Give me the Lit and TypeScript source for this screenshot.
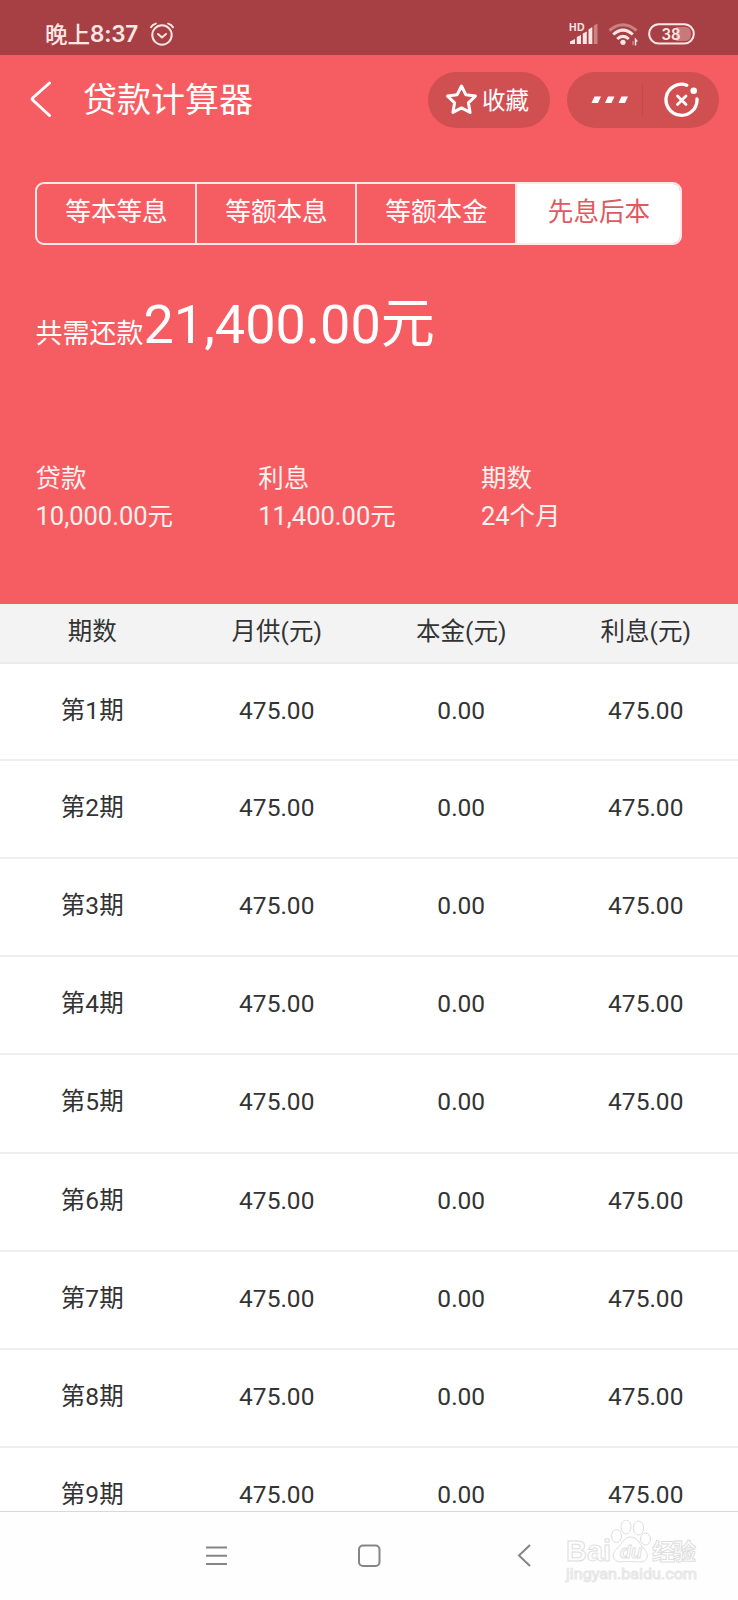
import { LitElement, html, css } from "lit";
import { customElement } from "lit/decorators.js";
import { classMap } from "lit/directives/class-map.js";

const TABS = ["等本等息", "等额本息", "等额本金", "先息后本"];
const SUMMARY = [
  ["贷款", "10,000.00元"],
  ["利息", "11,400.00元"],
  ["期数", "24个月"],
];
const HEAD = ["期数", "月供(元)", "本金(元)", "利息(元)"];
const ROWS = [1, 2, 3, 4, 5, 6, 7, 8, 9].map((n) => [`第${n}期`, "475.00", "0.00", "475.00"]);

@customElement("status-bar")
class StatusBar extends LitElement {
  static styles = css`
    :host { display: flex; align-items: center; height: 55px; background: #a74044; color: #ffe6e4; box-sizing: border-box; padding: 12px 43px 0 45px; }
    .time { line-height: 30px; display: flex; align-items: center; width: 102px; white-space: nowrap; }
    .cn { font: 500 22.5px/30px "Noto Sans CJK SC", sans-serif; margin-top: -2px; }
    .num { font: 600 22.5px/30px Inter, sans-serif; letter-spacing: -0.2px; }
    .grow { flex: 1; }
    svg { display: block; flex: none; }
    .wifi { margin-left: 9px; }
    .batt { margin-left: 9px; }
    .bt { font: 600 15.5px Inter, sans-serif; }
    .hd { font: 700 10.5px "Liberation Sans", sans-serif; }
  `;
  render() {
    return html`
      <div class="time"><span class="cn">晚上</span><span class="num">8:37</span></div>
      <svg width="28" height="28" viewBox="0 0 28 28" fill="none" stroke="#ffe6e4" stroke-width="2" stroke-linecap="round" stroke-linejoin="round">
        <circle cx="15" cy="15" r="9.7"/><path d="M11 14l4 3.400 4-3.400M4 7.200q1.500-2.700 4.800-3.600M26 7.200q-1.500-2.700-4.800-3.600"/>
      </svg>
      <div class="grow"></div>
      <svg width="30" height="24" viewBox="0 0 30 24" fill="#ffe6e4">
        <text class="hd" x="0" y="8.500" textLength="15.500">HD</text>
        <path d="M1 22v-2.500l5-2.500v5zM7.800 22v-7l4.200-2v9zM13.800 22V11.500l4-2V22zM19.500 22V7.500l3.800-2.500v17z"/><path opacity=".4" d="M24.800 22V3.500l3.700-2V22z"/>
      </svg>
      <svg class="wifi" width="31" height="24" viewBox="0 0 31 24" fill="none" stroke="#ffe6e4" stroke-width="3">
        <path opacity=".4" d="M1.500 8.500Q15 -3 28.500 8.500"/><path d="M5.200 12.500Q15 3.800 24.800 12.500M9.200 17Q15 11.800 20.800 17"/><circle cx="15" cy="20.300" r="2.600" fill="#ffe6e4" stroke="none"/><path stroke-width="1" opacity=".6" d="M25 23v-4"/><path stroke-width="1.500" d="M27.500 23.500v-6l1.800 2"/>
      </svg>
      <svg class="batt" width="47" height="22" viewBox="0 0 47 22">
        <path d="M28 4h9q6 0 6 7t-6 7h-9z" fill="#ffd0d0" opacity=".4"/>
        <rect x="1.200" y="1.200" width="44.600" height="19.300" rx="9.600" fill="none" stroke="#ffe6e4" stroke-width="2"/>
        <text class="bt" x="13.500" y="16.500" textLength="19" lengthAdjust="spacingAndGlyphs" fill="#ffe6e4">38</text>
      </svg>`;
  }
}

@customElement("title-bar")
class TitleBar extends LitElement {
  static styles = css`
    :host { display: flex; align-items: center; height: 89px; box-sizing: border-box; padding: 0 19px 0 29px; color: #fff; }
    h1 { margin: -4px 0 0 32px; font: 400 34px/50px "Noto Sans CJK SC", sans-serif; flex: 1; }
    .back { margin-top: -1px; }
    .fav, .capsule { display: flex; align-items: center; height: 56px; border-radius: 28px; background: #d05052; box-sizing: border-box; }
    .fav { width: 122px; padding-left: 17px; font: 400 23.500px/36px "Noto Sans CJK SC", sans-serif; gap: 4px; }
    .fav span { margin-top: -2px; }
    .capsule { width: 152px; margin-left: 17px; padding-left: 24px; }
    .sep { width: 1px; height: 34px; background: #c5484b; margin: 0 21px 0 13px; }
    svg { display: block; flex: none; }
  `;
  render() {
    return html`
      <svg class="back" width="22" height="38" viewBox="0 0 22 38" fill="none" stroke="#fff" stroke-width="3" stroke-linecap="round" stroke-linejoin="round"><path d="M20.500 3L3.700 18q-1 1 0 2L20.500 35.500"/></svg>
      <h1>贷款计算器</h1>
      <div class="fav">
        <svg width="33" height="33" viewBox="0 0 33 33" fill="none" stroke="#fff" stroke-width="3" stroke-linejoin="round"><path d="M16.500 3l4.300 8.700 9.600 1.400-7 6.700 1.700 9.600-8.600-4.500-8.600 4.500 1.700-9.600-7-6.700 9.600-1.400z"/></svg><span>收藏</span>
      </div>
      <div class="capsule">
        <svg width="38" height="8" viewBox="0 0 38 8" fill="#fff"><path d="M3.500 .500H10L7 7H.500zM17 .500h6.500l-3 6.500H14zM30.500 .500H37l-3 6.500h-6.500z"/></svg>
        <span class="sep"></span>
        <svg width="36" height="36" viewBox="0 0 36 36" fill="none" stroke="#fff" stroke-width="3.300" stroke-linecap="round"><path d="M22.800 3.200A15.500 15.500 0 1 0 33 17"/><path stroke-width="2.800" d="M13.500 14l8.500 8.500M22 14l-8.500 8.500"/><circle cx="29.700" cy="8.800" r="3.300" fill="#fff" stroke="none"/></svg>
      </div>`;
  }
}

@customElement("nav-bar")
class NavBar extends LitElement {
  static styles = css`
    :host { display: grid; grid-template-columns: 206px 152px 152px 1fr; align-items: center; height: 89px; box-sizing: border-box; border-top: 1px solid #d8d8d8; background: #fefefe; color: #858585; }
    svg { display: block; }
    .icon { margin-top: -1px; }
    .last { display: flex; align-items: flex-start; height: 88px; }
    .last .arrow { margin: 31px 0 0 7px; }
    .mark { margin: 8px 0 0 33px; }
    .ol { fill: #fefefe; stroke: #dedede; stroke-width: 1; }
    .t1 { font: 700 29px "Liberation Sans", sans-serif; }
    .t2 { font: italic 700 18px "Liberation Sans", sans-serif; }
    .t3 { font: 700 23px "Noto Sans CJK SC", sans-serif; }
    .t4 { font: 400 15px Roboto, "Liberation Sans", sans-serif; stroke: #e6e6e6; stroke-width: 1; }
  `;
  render() {
    return html`
      <span></span>
      <svg class="icon" width="22" height="22" viewBox="0 0 22 22" fill="none" stroke="currentColor" stroke-width="2"><path d="M0 2.500h21M0 10.800h21M0 19h21"/></svg>
      <svg class="icon" width="24" height="24" viewBox="0 0 24 24" fill="none" stroke="currentColor" stroke-width="2"><rect x="1" y="1.500" width="20.500" height="20.500" rx="4"/></svg>
      <div class="last">
        <svg class="arrow" width="15" height="25" viewBox="0 0 15 25" fill="none" stroke="currentColor" stroke-width="2"><path d="M13 2L2 12.500l11 10.500"/></svg>
        <svg class="mark" width="140" height="68" viewBox="-1 0 140 68">
          <g class="ol">
            <text class="t1" x="0" y="41" textLength="45" lengthAdjust="spacingAndGlyphs">Bai</text>
            <ellipse cx="50.500" cy="16" rx="5" ry="6.500"/><ellipse cx="60" cy="7" rx="5" ry="7"/><ellipse cx="72.500" cy="8" rx="5.200" ry="7"/><ellipse cx="79.500" cy="19" rx="5" ry="6"/>
            <path d="M64.500 17c7 0 9 7 13 11 6 6 5 14-4 14-4 0-14-1-18 0-9 0-11-8-4-14 5-4 6-11 13-11z"/>
            <text class="t2" x="54" y="38">du</text><text class="t3" x="86" y="40" textLength="44">经验</text>
            <text class="t4" x="0" y="59" textLength="131" lengthAdjust="spacingAndGlyphs">jingyan.baidu.com</text>
          </g>
        </svg>
      </div>`;
  }
}

@customElement("app-root")
class AppRoot extends LitElement {
  static styles = css`
    :host { display: flex; flex-direction: column; height: 1600px; overflow: hidden; background: #fff; font-family: Roboto, "Noto Sans CJK SC", sans-serif; color: #333; }
    .hero { height: 549px; flex: none; background: #f65d62; color: #fff; display: flex; flex-direction: column; }
    .tabs { display: grid; grid-template-columns: 160px 160px 160px 1fr; width: 647px; height: 63px; margin: 38px 0 0 35px; box-sizing: border-box; border: 2px solid #ffe9e8; border-radius: 9px; overflow: hidden; }
    .tab { font-size: 25.600px; line-height: 56px; text-align: center; padding-left: 1px; border-right: 2px solid #ffe0df; box-sizing: border-box; }
    .tab.on { background: #fff; color: #de5a60; border-right: 0; }
    .total { margin: 43px 0 0 35.500px; line-height: 74px; height: 74px; font-size: 27px; white-space: nowrap; }
    .total b { font-weight: 400; font-size: 54px; }
    .summary { display: grid; grid-template-columns: repeat(3, 222.700px); margin: 97px 0 0 35.500px; font-size: 25.500px; line-height: 38px; color: #fff1ef; }
    .row { display: grid; grid-template-columns: repeat(4, 1fr); text-align: center; font-size: 24.500px; box-sizing: border-box; border-bottom: 2px solid #eee; flex: none; height: 97.850px; line-height: 93px; }
    .row.head { height: 59.500px; line-height: 55px; background: #f3f3f3; border-color: #ececec; }
    .table { flex: 1; min-height: 0; overflow: hidden; display: flex; flex-direction: column; }
    .row.tall { height: 99.600px; }
    nav-bar, status-bar { flex: none; }
  `;
  render() {
    return html`
      <status-bar></status-bar>
      <section class="hero">
        <title-bar></title-bar>
        <div class="tabs">${TABS.map((t, i) => html`<div class=${classMap({ tab: true, on: i === 3 })}>${t}</div>`)}</div>
        <div class="total">共需还款<b>21,400.00元</b></div>
        <div class="summary">${SUMMARY.map(([k, v]) => html`<div><div>${k}</div><div>${v}</div></div>`)}</div>
      </section>
      <section class="table">
        <div class="row head">${HEAD.map((h) => html`<div>${h}</div>`)}</div>
        ${ROWS.map((r, i) => html`<div class=${classMap({ row: true, tall: i === 4 })}>${r.map((c) => html`<div>${c}</div>`)}</div>`)}
      </section>
      <nav-bar></nav-bar>`;
  }
}
